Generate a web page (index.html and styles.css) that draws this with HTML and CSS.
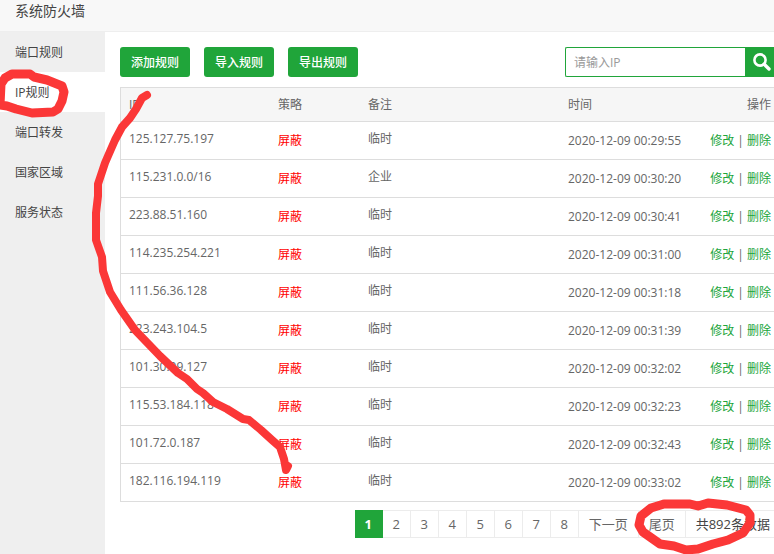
FILE: index.html
```html
<!DOCTYPE html>
<html lang="zh-CN">
<head>
    <meta charset="UTF-8">
    <meta name="viewport" content="width=device-width, initial-scale=1.0">
    <title>系统防火墙</title>
    <link rel="stylesheet" href="styles.css">
</head>
<body>
    <header class="title-bar">系统防火墙</header>

    <div class="layout">
        <nav class="sidebar">
            <a href="#">端口规则</a>
            <a href="#" class="active">IP规则</a>
            <a href="#">端口转发</a>
            <a href="#">国家区域</a>
            <a href="#">服务状态</a>
        </nav>

        <main class="content">
            <div class="toolbar">
                <button type="button" class="btn">添加规则</button>
                <button type="button" class="btn">导入规则</button>
                <button type="button" class="btn">导出规则</button>
                <form class="search">
                    <input type="text" id="search-ip" aria-label="请输入IP" placeholder="请输入IP">
                    <button type="button" aria-label="搜索">
                        <svg width="18" height="18" viewBox="0 0 18 18" fill="none" stroke="#fff">
                            <circle cx="7" cy="7" r="5.6" stroke-width="2.6"/>
                            <path d="M11.2 11.2L16 16" stroke-width="3.4" stroke-linecap="round"/>
                        </svg>
                    </button>
                </form>
            </div>

            <table class="rules">
                <thead>
                    <tr>
                        <th class="col-ip">IP</th>
                        <th class="col-policy">策略</th>
                        <th class="col-note">备注</th>
                        <th class="col-time">时间</th>
                        <th class="col-action">操作</th>
                    </tr>
                </thead>
                <tbody>
                    <tr><td class="raised">125.127.75.197</td><td class="deny">屏蔽</td><td class="raised">临时</td><td>2020-12-09 00:29:55</td><td class="col-action"><a href="#">修改</a> | <a href="#">删除</a></td></tr>
                    <tr><td class="raised">115.231.0.0/16</td><td class="deny">屏蔽</td><td class="raised">企业</td><td>2020-12-09 00:30:20</td><td class="col-action"><a href="#">修改</a> | <a href="#">删除</a></td></tr>
                    <tr><td class="raised">223.88.51.160</td><td class="deny">屏蔽</td><td class="raised">临时</td><td>2020-12-09 00:30:41</td><td class="col-action"><a href="#">修改</a> | <a href="#">删除</a></td></tr>
                    <tr><td class="raised">114.235.254.221</td><td class="deny">屏蔽</td><td class="raised">临时</td><td>2020-12-09 00:31:00</td><td class="col-action"><a href="#">修改</a> | <a href="#">删除</a></td></tr>
                    <tr><td class="raised">111.56.36.128</td><td class="deny">屏蔽</td><td class="raised">临时</td><td>2020-12-09 00:31:18</td><td class="col-action"><a href="#">修改</a> | <a href="#">删除</a></td></tr>
                    <tr><td class="raised">223.243.104.5</td><td class="deny">屏蔽</td><td class="raised">临时</td><td>2020-12-09 00:31:39</td><td class="col-action"><a href="#">修改</a> | <a href="#">删除</a></td></tr>
                    <tr><td class="raised">101.30.99.127</td><td class="deny">屏蔽</td><td class="raised">临时</td><td>2020-12-09 00:32:02</td><td class="col-action"><a href="#">修改</a> | <a href="#">删除</a></td></tr>
                    <tr><td class="raised">115.53.184.118</td><td class="deny">屏蔽</td><td class="raised">临时</td><td>2020-12-09 00:32:23</td><td class="col-action"><a href="#">修改</a> | <a href="#">删除</a></td></tr>
                    <tr><td class="raised">101.72.0.187</td><td class="deny">屏蔽</td><td class="raised">临时</td><td>2020-12-09 00:32:43</td><td class="col-action"><a href="#">修改</a> | <a href="#">删除</a></td></tr>
                    <tr><td class="raised">182.116.194.119</td><td class="deny">屏蔽</td><td class="raised">临时</td><td>2020-12-09 00:33:02</td><td class="col-action"><a href="#">修改</a> | <a href="#">删除</a></td></tr>
                </tbody>
            </table>

            <div class="pages">
                <span class="num current">1</span>
                <a href="#" class="num">2</a>
                <a href="#" class="num">3</a>
                <a href="#" class="num">4</a>
                <a href="#" class="num">5</a>
                <a href="#" class="num">6</a>
                <a href="#" class="num">7</a>
                <a href="#" class="num">8</a>
                <a href="#">下一页</a>
                <a href="#">尾页</a>
                <span class="total">共892条数据</span>
            </div>
        </main>
    </div>

    <!-- red pen marks -->
    <svg class="marks" width="774" height="554" viewBox="0 0 774 554" aria-hidden="true">
        <path class="ring" d="M1 84L5 78L12 74L30 74L34 77L47 80L62 86L64 92L62 101L58 109L53 112L32 113L16 109L7 106L0 105Z"/>
        <path d="M147 95L142 98L136 109L130 118L122 127L115 140L108 156L105 163L98 184L98 196L96 213L96 240L102 257L103 271L110 292L121 310L135 330L160 356L178 373L187 379L197 389L203 393L213 402L227 409L243 419L249 420L261 430L272 440L280 447L284 459L286 470L288 466"/>
        <path class="ring" d="M664 504L690 504L698 506L708 503L727 505L746 510L750 515L750 523L743 533L728 540L713 544L698 549L686 550L674 546L660 544L643 532L639 525L641 516L651 508L664 504"/>
    </svg>
</body>
</html>
```
FILE: styles.css
```css
* {
    box-sizing: border-box;
}
body {
    margin: 0;
    min-height: 100vh;
    display: flex;
    flex-direction: column;
    overflow: hidden;
    position: relative;
    font-family: "Open Sans", "Noto Sans CJK SC", sans-serif;
    font-size: 12px;
    line-height: 18px;
    color: #666;
    background: #fff;
}
a {
    color: #20a53a;
    text-decoration: none;
}
.title-bar {
    padding: 1px 15px 10px;
    font-size: 14px;
    line-height: 20px;
    color: #444;
    background: #f8f8f8;
    border-bottom: 1px solid #eee;
}
.layout {
    display: flex;
    flex: 1;
}
.sidebar {
    width: 105px;
    flex-shrink: 0;
    background: #efefef;
}
.sidebar a {
    display: block;
    padding: 12px 0 10px 15px;
    color: #444;
}
.sidebar a.active {
    background: #fff;
}
.content {
    flex: 1;
    min-width: 0;
    padding: 15px 0 15px 15px;
}
.toolbar {
    display: flex;
    gap: 14px;
    margin-bottom: 10px;
}
.btn {
    height: 30px;
    padding: 0 11px;
    border: none;
    border-radius: 3px;
    font: 500 12px "Open Sans", "Noto Sans CJK SC", sans-serif;
    color: #fff;
    background: #20a53a;
    cursor: pointer;
}
.search {
    display: flex;
    margin-left: auto;
}
.search input {
    width: 180px;
    height: 30px;
    padding: 0 8px;
    border: 1px solid #20a53a;
    border-right: none;
    border-radius: 2px 0 0 2px;
    font: inherit;
    color: #666;
}
.search input::placeholder {
    color: #999;
}
.search button {
    display: flex;
    align-items: center;
    width: 29px;
    height: 30px;
    padding: 0 0 0 8px;
    border: none;
    background: #20a53a;
}
.rules {
    width: 100%;
    table-layout: fixed;
    border-collapse: separate;
    border-spacing: 0;
    border-top: 1px solid #ddd;
    border-left: 1px solid #ddd;
}
.rules th, .rules td {
    padding: 10px 0 9px 8px;
    border-bottom: 1px solid #ddd;
    text-align: left;
    font-weight: normal;
    white-space: nowrap;
}
.rules th {
    padding: 8px 0 8px 8px;
    line-height: 17px;
    background: #f6f6f6;
}
.rules td.raised {
    padding: 8px 0 11px 8px;
}
.rules td.deny {
    color: #f00;
}
.rules .col-ip {
    width: 149px;
}
.rules .col-policy {
    width: 90px;
}
.rules .col-note {
    width: 200px;
}
.rules .col-time {
    width: 140px;
}
.rules .col-action {
    padding-left: 0;
    padding-right: 3px;
    text-align: right;
}
.pages {
    display: flex;
    justify-content: flex-end;
    margin-top: 8px;
    font-size: 13px;
    line-height: 26px;
}
.pages a, .pages span {
    padding: 0 10px;
    border: 1px solid #ececec;
    border-left: none;
    color: #666;
    text-align: center;
    white-space: nowrap;
}
.pages .num {
    width: 28px;
    padding: 0;
}
.pages .current {
    border-color: #20a53a;
    font-weight: bold;
    color: #fff;
    background: #20a53a;
}
.pages .total {
    padding-right: 4px;
    border-right: none;
    color: #444;
}
.marks {
    position: absolute;
    top: 0;
    left: 0;
    pointer-events: none;
    fill: none;
    stroke: #fb3737;
    stroke-width: 8;
    stroke-linecap: round;
    stroke-linejoin: round;
}
.marks .ring {
    stroke-width: 9;
}
```
